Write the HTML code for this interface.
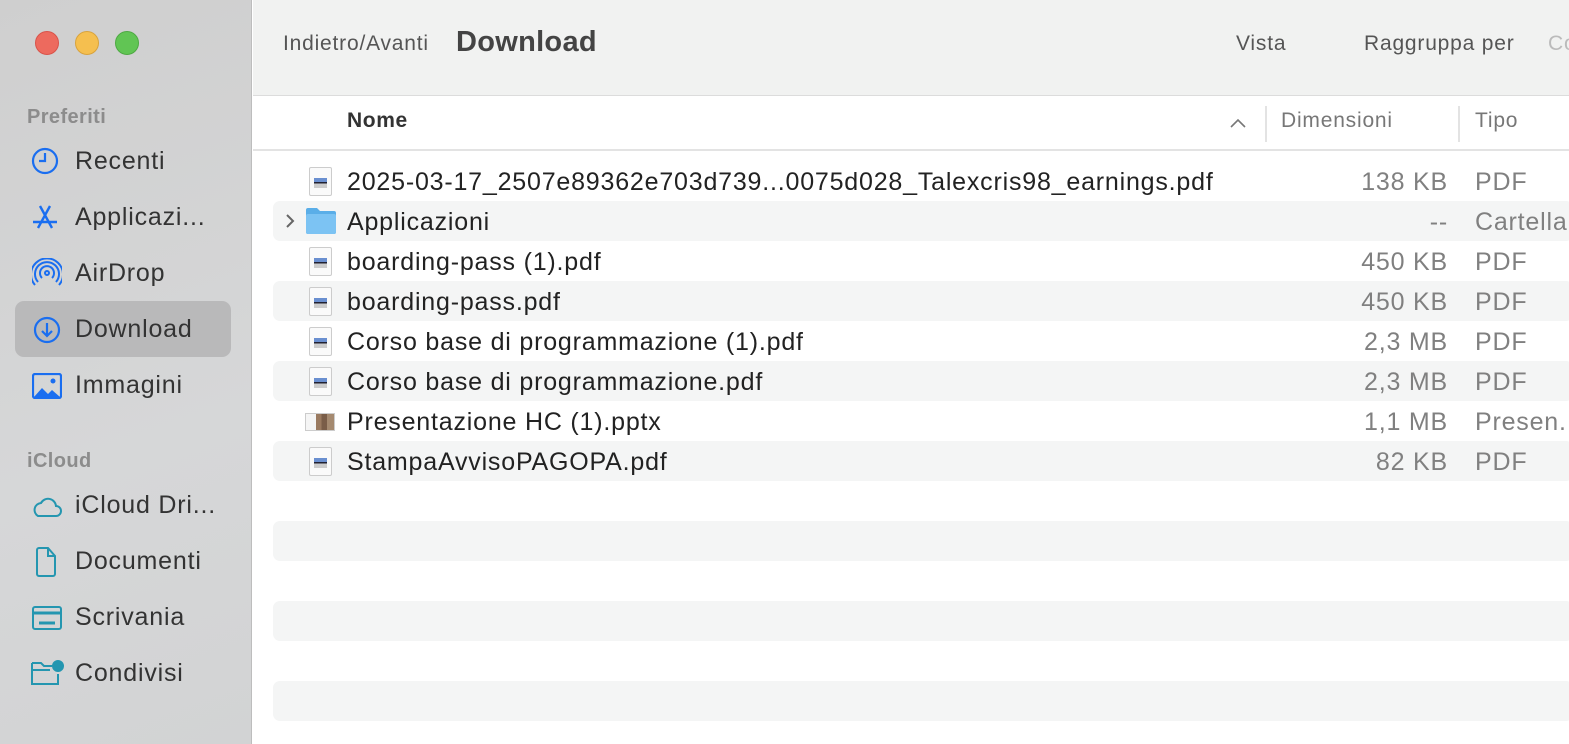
<!DOCTYPE html>
<html><head><meta charset="utf-8"><style>
*{margin:0;padding:0;box-sizing:border-box}
body{width:1569px;height:744px;overflow:hidden;font-family:"Liberation Sans",sans-serif;background:#fff;position:relative;letter-spacing:0.05em}
.sb{position:absolute;left:0;top:0;width:252px;height:744px;background:linear-gradient(160deg,#cfcfcf,#d6d7d8 60%,#d2d3d4);border-right:1px solid #bdbdbd}
.dot{position:absolute;top:31px;width:24px;height:24px;border-radius:50%}
.sec{position:absolute;left:27px;font-size:20px;font-weight:bold;color:#8c8c8c;letter-spacing:0.02em}
.it{position:absolute;left:75px;font-size:25px;color:#333;white-space:nowrap}
.ic{position:absolute;left:30px}
.sel{position:absolute;left:15px;top:301px;width:216px;height:56px;border-radius:9px;background:#b9b9ba}
.tb{position:absolute;left:253px;top:0;right:0;height:96px;background:#f1f2f1;border-bottom:1px solid #dcdcdc}
.t{position:absolute;font-size:21px;color:#555;top:32px;white-space:nowrap}
.hd{position:absolute;left:253px;top:96px;right:0;height:55px;background:#fff;border-bottom:2px solid #e3e3e3}
.row{position:absolute;left:273px;width:1300px;height:40px;font-size:25px;color:#222}
.s{background:#f4f5f5;border-radius:7px}
.row .n{position:absolute;left:74px;top:7px;white-space:nowrap}
.row .z{position:absolute;right:125px;top:7px;color:#808080;white-space:nowrap}
.row .k{position:absolute;left:1202px;top:7px;color:#808080;white-space:nowrap}
.pdf{position:absolute;left:36px;top:6px;width:23px;height:29px;background:#fafafa;border:1px solid #ccc;border-radius:2px}
.pdf:after{content:"";position:absolute;left:4px;top:10px;width:13px;height:10px;background:linear-gradient(#6a8fd0 0 40%,#223 40% 55%,#ccc 55%)}
</style></head><body>
<div class="sb">
<div class="dot" style="left:35px;background:#ed6a5e;border:1px solid #d9534a"></div>
<div class="dot" style="left:75px;background:#f5bf4f;border:1px solid #d9a33c"></div>
<div class="dot" style="left:115px;background:#61c554;border:1px solid #4ea943"></div>
<div class="sec" style="top:106px">Preferiti</div>
<svg class="ic" style="top:147px;left:31px" width="28" height="28" viewBox="0 0 28 28" fill="none" stroke="#1a6ef0" stroke-width="2.2"><circle cx="14" cy="14" r="12"/><path d="M14 6v8h-6"/></svg>
<div class="it" style="top:147px">Recenti</div>
<svg class="ic" style="top:204px" width="30" height="28" viewBox="0 0 30 28" fill="none" stroke="#1a6ef0" stroke-width="2.4"><path d="M10 2l12 22M20 2L8 24M3 18h24"/></svg>
<div class="it" style="top:203px">Applicazi...</div>
<svg class="ic" style="top:258px;left:32px" width="30" height="30" viewBox="0 0 30 30" fill="none" stroke="#1a6ef0" stroke-width="2"><circle cx="15" cy="15" r="2"/><path d="M10 20a7 7 0 1 1 10 0M6 24a12 12 0 1 1 18 0M3 27a16 16 0 1 1 24 0"/></svg>
<div class="it" style="top:259px">AirDrop</div>
<div class="sel"></div>
<svg class="ic" style="top:316px;left:33px" width="28" height="28" viewBox="0 0 28 28" fill="none" stroke="#1a6ef0" stroke-width="2.2"><circle cx="14" cy="14" r="12"/><path d="M14 7v13M9 15l5 5 5-5"/></svg>
<div class="it" style="top:315px">Download</div>
<svg class="ic" style="top:373px;left:32px" width="30" height="26" viewBox="0 0 30 26"><rect x="1" y="1" width="28" height="24" rx="2" fill="none" stroke="#1a6ef0" stroke-width="2.2"/><path d="M2 24l8-9 6 6 4-4 8 7z" fill="#1a6ef0"/><circle cx="21" cy="8" r="2.5" fill="#1a6ef0"/></svg>
<div class="it" style="top:371px">Immagini</div>
<div class="sec" style="top:450px">iCloud</div>
<svg class="ic" style="top:494px" width="32" height="24" viewBox="0 0 32 24" fill="none" stroke="#2496b0" stroke-width="2"><path d="M8 22h18a5 5 0 0 0 0-10 8 8 0 0 0-15-3A7 7 0 0 0 8 22z"/></svg>
<div class="it" style="top:491px">iCloud Dri...</div>
<svg class="ic" style="top:547px;left:35px" width="22" height="30" viewBox="0 0 22 30" fill="none" stroke="#2496b0" stroke-width="2"><path d="M2 3a2 2 0 0 1 2-2h9l7 8v18a2 2 0 0 1-2 2H4a2 2 0 0 1-2-2zM13 1v8h7"/></svg>
<div class="it" style="top:547px">Documenti</div>
<svg class="ic" style="top:606px;left:32px" width="30" height="24" viewBox="0 0 30 24" fill="none" stroke="#2496b0" stroke-width="2"><rect x="1" y="1" width="28" height="22" rx="2"/><path d="M1 7h28M7 17h16" stroke-width="3"/></svg>
<div class="it" style="top:603px">Scrivania</div>
<svg class="ic" style="top:660px" width="34" height="26" viewBox="0 0 34 26" fill="none" stroke="#2496b0" stroke-width="2"><path d="M2 3h9l3 3h8M2 3v21h26v-10M2 10h18"/><circle cx="28" cy="6" r="5" fill="#2496b0"/></svg>
<div class="it" style="top:659px">Condivisi</div>
</div>
<div class="tb">
<div class="t" style="left:30px">Indietro/Avanti</div>
<div style="position:absolute;left:203px;top:26px;font-size:29px;font-weight:bold;color:#444;letter-spacing:0.01em">Download</div>
<div class="t" style="left:983px">Vista</div>
<div class="t" style="left:1111px">Raggruppa per</div>
<div class="t" style="left:1295px;color:#bbb">Co</div>
</div>
<div class="hd">
<div style="position:absolute;left:94px;top:13px;font-size:21px;font-weight:bold;color:#333;letter-spacing:0.03em">Nome</div>
<svg style="position:absolute;left:977px;top:22px" width="16" height="10" viewBox="0 0 16 10" fill="none" stroke="#777" stroke-width="1.6"><path d="M1 9l7-7 7 7"/></svg>
<div style="position:absolute;left:1012px;top:10px;width:2px;height:36px;background:#e3e3e3"></div>
<div style="position:absolute;left:1028px;top:13px;font-size:21px;color:#777">Dimensioni</div>
<div style="position:absolute;left:1205px;top:10px;width:2px;height:36px;background:#e3e3e3"></div>
<div style="position:absolute;left:1222px;top:13px;font-size:21px;color:#777">Tipo</div>
</div>
<div class="row" style="top:161px"><div class="pdf"></div><div class="n">2025-03-17_2507e89362e703d739...0075d028_Talexcris98_earnings.pdf</div><div class="z">138 KB</div><div class="k">PDF</div></div>
<div class="row s" style="top:201px"><svg style="position:absolute;left:12px;top:12px" width="10" height="16" viewBox="0 0 10 16" fill="none" stroke="#666" stroke-width="2"><path d="M2 2l6 6-6 6"/></svg><svg style="position:absolute;left:32px;top:6px" width="32" height="28" viewBox="0 0 32 28"><path d="M1 3a2 2 0 0 1 2-2h9l3 3h14a2 2 0 0 1 2 2v19a2 2 0 0 1-2 2H3a2 2 0 0 1-2-2z" fill="#5aaee8"/><rect x="1" y="7" width="30" height="20" rx="2" fill="#7cc3f3"/></svg><div class="n">Applicazioni</div><div class="z">--</div><div class="k">Cartella</div></div>
<div class="row" style="top:241px"><div class="pdf"></div><div class="n">boarding-pass (1).pdf</div><div class="z">450 KB</div><div class="k">PDF</div></div>
<div class="row s" style="top:281px"><div class="pdf"></div><div class="n">boarding-pass.pdf</div><div class="z">450 KB</div><div class="k">PDF</div></div>
<div class="row" style="top:321px"><div class="pdf"></div><div class="n">Corso base di programmazione (1).pdf</div><div class="z">2,3 MB</div><div class="k">PDF</div></div>
<div class="row s" style="top:361px"><div class="pdf"></div><div class="n">Corso base di programmazione.pdf</div><div class="z">2,3 MB</div><div class="k">PDF</div></div>
<div class="row" style="top:401px"><div style="position:absolute;left:32px;top:12px;width:30px;height:18px;background:linear-gradient(90deg,#f5f5f5 0 35%,#9a7a60 35% 55%,#7a5d48 55% 75%,#a58a70 75%);border:1px solid #ccc"></div><div class="n">Presentazione HC (1).pptx</div><div class="z">1,1 MB</div><div class="k">Presen...</div></div>
<div class="row s" style="top:441px"><div class="pdf"></div><div class="n">StampaAvvisoPAGOPA.pdf</div><div class="z">82 KB</div><div class="k">PDF</div></div>
<div class="row s" style="top:521px"></div>
<div class="row s" style="top:601px"></div>
<div class="row s" style="top:681px"></div>
</body></html>
